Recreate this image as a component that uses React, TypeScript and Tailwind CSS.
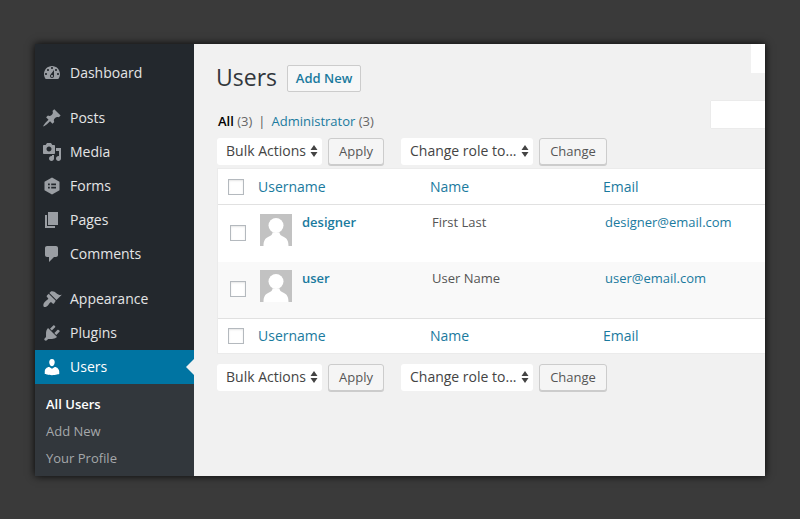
import type { ReactNode } from 'react';

const ICONS: Record<string, string> = {
  dashboard:
    'M3.76 16h12.48c1.1-1.37 1.76-3.11 1.76-5 0-4.42-3.58-8-8-8s-8 3.58-8 8c0 1.89.66 3.63 1.76 5zM10 4c.55 0 1 .45 1 1s-.45 1-1 1-1-.45-1-1 .45-1 1-1zM6 6c.55 0 1 .45 1 1s-.45 1-1 1-1-.45-1-1 .45-1 1-1zm8 0c.55 0 1 .45 1 1s-.45 1-1 1-1-.45-1-1 .45-1 1-1zm-5.37 5.55L12 7v6c0 1.1-.9 2-2 2s-2-.9-2-2c0-.57.24-1.08.63-1.45zM4 10c.55 0 1 .45 1 1s-.45 1-1 1-1-.45-1-1 .45-1 1-1zm12 0c.55 0 1 .45 1 1s-.45 1-1 1-1-.45-1-1 .45-1 1-1zm-5 3c0-.55-.45-1-1-1s-1 .45-1 1 .45 1 1 1 1-.45 1-1z',
  posts:
    'M10.44 3.02l1.82-1.82 6.36 6.35-1.83 1.82c-1.05-.68-2.48-.57-3.41.36l-.75.75c-.92.93-1.04 2.35-.35 3.41l-1.83 1.82-2.41-2.41-2.8 2.79c-.42.42-3.38 2.71-3.8 2.29s1.86-3.39 2.28-3.81l2.79-2.79L4.1 9.36l1.83-1.82c1.05.69 2.48.57 3.4-.36l.75-.75c.93-.92 1.05-2.35.36-3.41z',
  media:
    'M13 11V4c0-.55-.45-1-1-1h-1.67L9 1H5L3.67 3H2c-.55 0-1 .45-1 1v7c0 .55.45 1 1 1h10c.55 0 1-.45 1-1zM7 4.5c1.38 0 2.5 1.12 2.5 2.5S8.38 9.5 7 9.5 4.5 8.38 4.5 7 5.62 4.5 7 4.5zM14 6h5v10.5c0 1.38-1.12 2.5-2.5 2.5S14 17.88 14 16.5s1.12-2.5 2.5-2.5c.17 0 .34.02.5.05V9h-3V6zm-4 8.05V13h2v3.5c0 1.38-1.12 2.5-2.5 2.5S7 17.88 7 16.5 8.12 14 9.5 14c.17 0 .34.02.5.05z',
  forms:
    'M10 1.500l7.500 4.250v8.500L10 18.500l-7.500-4.250v-8.500L10 1.500zM6 7.500v1.800h1.800V7.500H6zm3.200 0v1.800H14V7.500H9.200zM6 10.700v1.800h1.800v-1.800H6zm3.200 0v1.800H14v-1.800H9.200z',
  pages: 'M6 15V2h10v13H6zm-1 1h8v2H3V5h2v11z',
  comments:
    'M5 2h9c1.1 0 2 .9 2 2v7c0 1.1-.9 2-2 2h-2l-5 5v-5H5c-1.1 0-2-.9-2-2V4c0-1.1.9-2 2-2z',
  appearance:
    'M14.48 11.06L7.41 3.99l1.5-1.5c.5-.56 2.3-.47 3.51.32 1.21.8 1.43 1.28 2.91 2.1 1.18.64 2.45 1.26 4.45.85zm-.71.71L6.7 4.7 4.93 6.47c-.39.39-.39 1.02 0 1.41l1.06 1.06c.39.39.39 1.03 0 1.42-.6.6-1.43 1.11-2.21 1.69-.35.26-.7.53-1.01.84-1.34 1.34-1.78 3.39-1.17 4.51.61 1.12 2.68.59 4.03-.76.31-.31.58-.66.84-1.01.58-.78 1.09-1.61 1.69-2.21.39-.39 1.03-.39 1.42 0l1.06 1.06c.39.39 1.02.39 1.41 0z',
  plugins:
    'M13.11 4.36L9.87 7.6 8 5.73l3.24-3.24c.35-.34 1.05-.2 1.56.32.52.51.66 1.21.31 1.55zm-8 1.77l.91-1.12 9.01 9.01-1.19.84c-.71.71-2.63 1.16-3.82 1.16H6.14L4.9 17.26c-.59.59-1.54.59-2.12 0-.59-.58-.59-1.53 0-2.12l1.24-1.24v-3.88c0-1.13.4-3.19 1.09-3.89zm7.26 3.97l3.24-3.24c.34-.35 1.04-.21 1.55.31.52.51.66 1.21.31 1.55l-3.24 3.25z',
  users:
    'M10 9.25c-2.27 0-2.73-3.44-2.73-3.44C7 4.02 7.82 2 9.97 2c2.16 0 2.98 2.02 2.71 3.81 0 0-.41 3.44-2.68 3.44zm0 2.57L12.72 10c2.39 0 4.52 2.33 4.52 4.53v2.49s-3.65 1.13-7.24 1.13c-3.65 0-7.24-1.13-7.24-1.13v-2.49c0-2.25 1.94-4.48 4.47-4.48z',
};

function MenuItem({ icon, label, active }: { icon: string; label: string; active?: boolean }) {
  return (
    <div className={`relative flex h-[34px] items-center pl-[7px] ${active ? 'bg-[#0074a2] text-white' : 'text-[#e4e5e6]'}`}>
      <svg viewBox="0 0 20 20" className={`h-[20px] w-[20px] ${active ? 'fill-white' : 'fill-[#9a9ea3]'}`}>
        <path d={ICONS[icon]} />
      </svg>
      <span className="mb-[2px] ml-[8px] text-[14px]">{label}</span>
      {active && (
        <span className="absolute right-0 top-[9px] border-y-[8px] border-r-[8px] border-y-transparent border-r-[#f1f1f1]" />
      )}
    </div>
  );
}

function Sidebar() {
  return (
    <aside className="flex w-[159px] shrink-0 flex-col bg-[#23282d] pt-[12px]">
      <MenuItem icon="dashboard" label="Dashboard" />
      <div className="h-[11px]" />
      <MenuItem icon="posts" label="Posts" />
      <MenuItem icon="media" label="Media" />
      <MenuItem icon="forms" label="Forms" />
      <MenuItem icon="pages" label="Pages" />
      <MenuItem icon="comments" label="Comments" />
      <div className="h-[11px]" />
      <MenuItem icon="appearance" label="Appearance" />
      <MenuItem icon="plugins" label="Plugins" />
      <MenuItem icon="users" label="Users" active />
      <div className="flex flex-1 flex-col bg-[#32373c] pl-[11px] pt-[7px] text-[13px] text-[#a5a8ab]">
        <div className="flex h-[27px] items-center font-semibold text-white">All Users</div>
        <div className="flex h-[27px] items-center">Add New</div>
        <div className="flex h-[27px] items-center">Your Profile</div>
      </div>
    </aside>
  );
}

function SelectBox({ label, width }: { label: string; width: string }) {
  return (
    <div className={`flex h-[27px] items-center justify-between rounded-[3px] bg-white pb-[2px] pl-[9px] pr-[4px] text-[14px] text-[#444444] ${width}`}>
      <span>{label}</span>
      <svg viewBox="0 0 8 12" className="h-[12px] w-[8px] fill-[#444444]">
        <path d="M4 0l3.500 5H.5zM4 12L.5 7h7z" />
      </svg>
    </div>
  );
}

function Btn({ children, width }: { children: ReactNode; width: string }) {
  return (
    <div className={`flex h-[27px] items-center justify-center rounded-[3px] border border-[#cccccc] bg-[#f5f5f5] pt-[1px] text-[13px] text-[#555555] shadow-[0_1px_0_#cccccc] ${width}`}>
      {children}
    </div>
  );
}

function TableNav() {
  return (
    <div className="flex h-[27px] items-center">
      <SelectBox label="Bulk Actions" width="w-[105px]" />
      <div className="ml-[6px]">
        <Btn width="w-[56px]">Apply</Btn>
      </div>
      <div className="ml-[17px]">
        <SelectBox label="Change role to..." width="w-[132px]" />
      </div>
      <div className="ml-[6px]">
        <Btn width="w-[68px]">Change</Btn>
      </div>
    </div>
  );
}

function Checkbox() {
  return <div className="h-[16px] w-[16px] shrink-0 border border-[#b4b9be] bg-white shadow-[inset_0_1px_2px_rgba(0,0,0,0.1)]" />;
}

function HeadRow({ box, label }: { box: string; label: string }) {
  return (
    <div className={`flex items-center pl-[10px] text-[14px] text-[#1a7a9e] ${box}`}>
      <Checkbox />
      <span className={`ml-[14px] w-[172px] ${label}`}>Username</span>
      <span className={`w-[173px] ${label}`}>Name</span>
      <span className={label}>Email</span>
    </div>
  );
}

function Avatar() {
  return (
    <svg viewBox="0 0 32 32" className="h-[32px] w-[32px] shrink-0">
      <rect width="32" height="32" fill="#c2c2c2" />
      <circle cx="16" cy="11.500" r="7.500" fill="#ffffff" />
      <path d="M3.500 32c0-5 1.500-8 5.500-9.500 2-.8 3.500-2 3.500-4h7c0 2 1.500 3.200 3.500 4 4 1.500 5.500 4.500 5.500 9.500z" fill="#ffffff" />
    </svg>
  );
}

function UserRow({ username, name, email, box }: { username: string; name: string; email: string; box: string }) {
  return (
    <div className={`flex items-start pl-[12px] text-[13px] leading-[16px] ${box}`}>
      <div className="mt-[11px]">
        <Checkbox />
      </div>
      <div className="ml-[14px]">
        <Avatar />
      </div>
      <span className="ml-[10px] w-[130px] font-semibold text-[#1a7a9e]">{username}</span>
      <span className="w-[173px] text-[#555555]">{name}</span>
      <span className="text-[#1a7a9e]">{email}</span>
    </div>
  );
}

export default function App() {
  return (
    <div className="h-[519px] bg-[#3a3a3a] pl-[35px] pt-[44px] font-['Open_Sans',sans-serif]">
      <div className="flex h-[432px] w-[730px] overflow-hidden shadow-[0_0_8px_rgba(0,0,0,0.9)]">
        <Sidebar />
        <main className="flex min-w-0 flex-1 flex-col bg-[#f1f1f1]">
          <div className="flex h-[21px] shrink-0 justify-end">
            <div className="h-[29px] w-[14px] bg-white" />
          </div>
          <div className="flex items-center pl-[22px]">
            <h1 className="mb-[2px] text-[23px] leading-[25px] text-[#32373c]">Users</h1>
            <div className="ml-[10px] flex h-[27px] w-[74px] items-center justify-center rounded-[2px] border border-[#cccccc] bg-[#f7f7f7] text-[13px] font-semibold text-[#1a7a9e]">
              Add New
            </div>
          </div>
          <div className="mt-[8px] flex h-[34px] items-start justify-between pl-[24px]">
            <div className="mt-[12px] text-[13px] leading-[18px] text-[#666666]">
              <span className="font-semibold text-black">All</span> (3)
              <span className="mx-[6px] text-[#555555]">|</span>
              <span className="text-[#1a7a9e]">Administrator</span> (3)
            </div>
            <div className="mt-[1px] h-[27px] w-[54px] bg-white shadow-[0_0_1px_#cccccc]" />
          </div>
          <div className="ml-[23px] mt-[4px]">
            <TableNav />
          </div>
          <div className="ml-[23px] mt-[3px] border border-r-0 border-[#ebebeb] bg-white">
            <HeadRow box="h-[36px] border-b border-[#e1e1e1]" label="" />
            <UserRow username="designer" name="First Last" email="designer@email.com" box="h-[57px] bg-white pt-[9px]" />
            <UserRow username="user" name="User Name" email="user@email.com" box="h-[56px] bg-[#f9f9f9] pt-[8px]" />
            <HeadRow box="h-[35px] border-t border-[#e1e1e1]" label="mb-[2px]" />
          </div>
          <div className="ml-[23px] mt-[10px]">
            <TableNav />
          </div>
        </main>
      </div>
    </div>
  );
}
